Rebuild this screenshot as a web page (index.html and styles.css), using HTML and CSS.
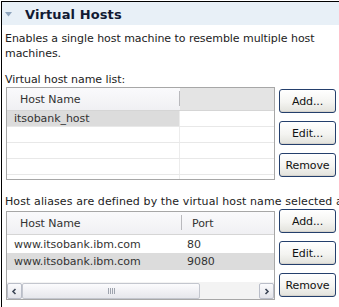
FILE: index.html
```html
<!DOCTYPE html>
<html>
<head>
<meta charset="utf-8">
<link rel="stylesheet" href="styles.css">
</head>
<body>
<div class="panel">
  <div class="section-head">
    <svg class="twisty" width="7" height="5" viewBox="0 0 7 5"><path d="M0 0H7L3.5 4.5Z" fill="#8ea4bc"/></svg>
    <span class="title">Virtual Hosts</span>
  </div>
  <div class="content">
    <p class="desc">Enables a single host machine to resemble multiple host machines.</p>
    <p class="label">Virtual host name list:</p>
    <div class="group">
      <div class="table t1">
        <div class="thead">
          <div class="th c1">Host Name</div>
          <div class="th filler"></div>
        </div>
        <div class="tbody grid">
          <div class="tr sel"><div class="td c1">itsobank_host</div><div class="td rest"></div></div>
          <div class="tr"><div class="td c1"></div><div class="td rest"></div></div>
          <div class="tr"><div class="td c1"></div><div class="td rest"></div></div>
          <div class="tr"><div class="td c1"></div><div class="td rest"></div></div>
          <div class="tr"><div class="td c1"></div><div class="td rest"></div></div>
        </div>
      </div>
      <div class="buttons b1">
        <button class="btn">Add...</button>
        <button class="btn">Edit...</button>
        <button class="btn">Remove</button>
      </div>
    </div>
    <p class="label cut">Host aliases are defined by the virtual host name selected above.</p>
    <div class="group">
      <div class="table t2">
        <div class="thead">
          <div class="th c1">Host Name</div>
          <div class="th c2">Port</div>
        </div>
        <div class="tbody">
          <div class="tr"><div class="td c1">www.itsobank.ibm.com</div><div class="td c2">80</div></div>
          <div class="tr sel full"><div class="td c1">www.itsobank.ibm.com</div><div class="td c2">9080</div></div>
        </div>
        <div class="hscroll">
          <div class="sb-btn"><svg width="7" height="7" viewBox="0 0 7 7"><path d="M4.5 1L2 3.5L4.5 6" fill="none" stroke="#3c4656" stroke-width="1.6"/></svg></div>
          <div class="sb-thumb"><span class="grip"></span></div>
          <div class="sb-track"></div>
          <div class="sb-btn"><svg width="7" height="7" viewBox="0 0 7 7"><path d="M2.5 1L5 3.5L2.5 6" fill="none" stroke="#3c4656" stroke-width="1.6"/></svg></div>
        </div>
      </div>
      <div class="buttons b2">
        <button class="btn">Add...</button>
        <button class="btn">Edit...</button>
        <button class="btn">Remove</button>
      </div>
    </div>
  </div>
</div>
</body>
</html>
```

FILE: styles.css
```css
* { box-sizing: border-box; }
html, body { margin: 0; padding: 0; background: #fff; }
body {
  width: 339px;
  height: 307px;
  overflow: hidden;
  font-family: "DejaVu Sans", Tahoma, sans-serif;
  font-size: 11px;
  letter-spacing: -0.05px;
  color: #222;
}
.panel {
  margin: 1px 0 0 1px;
  border-top: 1px solid #000;
  border-left: 1px solid #000;
  height: 306px;
}
.section-head {
  height: 23px;
  background: #e8f0f7;
  display: flex;
  align-items: center;
  padding-left: 3px;
}
.twisty { margin-top: 2px; }
.title {
  margin-left: 13px;
  font-weight: bold;
  font-size: 13px;
  letter-spacing: 0.1px;
  color: #111a33;
  line-height: 16px;
  padding-top: 2px;
}
.content { padding-left: 3px; }
p { margin: 0; }
.desc { margin-top: 6px; line-height: 15px; padding-right: 4px; }
.label { margin-top: 11px; line-height: 15px; }
.label.cut { margin-top: 14px; white-space: nowrap; overflow: hidden; letter-spacing: 0.1px; }
.group { display: flex; align-items: flex-start; gap: 4px; }
.table {
  margin-left: 1px;
  width: 269px;
  border: 1px solid #a7a7a7;
  background: #fff;
  display: flex;
  flex-direction: column;
  overflow: hidden;
  color: #333;
}
.t1 { height: 93px; }
.t2 { height: 89px; margin-top: 2px; }
.thead { display: flex; height: 23px; flex: none; }
.th {
  line-height: 22px;
  padding-top: 1px;
  border-bottom: 1px solid #d5d5d5;
  white-space: nowrap;
}
.th.c1 {
  background: linear-gradient(#fafafc, #f0f0f3);
  padding-left: 13px;
  position: relative;
}
.th.c1::after {
  content: "";
  position: absolute;
  right: 0;
  top: 3px;
  bottom: 4px;
  width: 1px;
  background: #b9b9bd;
}
.t1 .th.c1 { width: 173px; }
.t2 .th.c1 { width: 175px; }
.th.filler { flex: 1; background: #e4e4e4; }
.th.c2 { flex: 1; background: linear-gradient(#fafafc, #f0f0f3); padding-left: 10px; }
.tbody { flex: 1; overflow: hidden; }
.tr { display: flex; height: 17px; }
.td { line-height: 17px; white-space: nowrap; }
.grid .tr { height: 16px; border-bottom: 1px solid #e8e8e8; }
.grid .td { line-height: 16px; }
.t1 .td.c1 { width: 173px; padding-left: 7px; border-right: 1px solid #ececec; }
.t1 .td.rest { flex: 1; }
.t1 .tr.sel .td.c1 { background: #dcdcdc; }
.t2 .tbody { padding-top: 1px; }
.t2 .td.c1 { width: 175px; padding-left: 7px; }
.t2 .td.c2 { flex: 1; padding-left: 5px; }
.t2 .tr.sel { background: #dcdcdc; }
.hscroll {
  height: 17px;
  flex: none;
  display: flex;
  background: #f3f3f3;
}
.sb-btn {
  width: 15px;
  height: 16px;
  margin-top: 1px;
  border: 1px solid #b9bdc8;
  border-radius: 2px;
  background: linear-gradient(#fbfbfd, #e3e4ea);
  display: flex;
  align-items: center;
  justify-content: center;
}
.sb-thumb {
  width: 178px;
  height: 16px;
  margin-top: 1px;
  border: 1px solid #c3c6ce;
  border-radius: 2px;
  background: linear-gradient(#fbfbfd, #e6e7ec);
  display: flex;
  align-items: center;
  justify-content: center;
}
.grip {
  width: 7px;
  height: 6px;
  background: repeating-linear-gradient(90deg, #9ea3ad 0 1px, transparent 1px 2px);
}
.sb-track { flex: 1; }
.buttons { display: flex; flex-direction: column; gap: 8px; }
.b1 { margin-top: 2px; }
.b2 { margin-top: 0; }
.btn {
  width: 57px;
  height: 24px;
  padding: 0;
  font-family: "DejaVu Sans", Tahoma, sans-serif;
  font-size: 11px;
  letter-spacing: -0.1px;
  color: #111;
  border: 1px solid #243f6c;
  border-radius: 3px;
  background: linear-gradient(#ffffff, #f4f4f1 55%, #e2e2dc);
  box-shadow: inset 0 -1px 0 #d6d3cc;
}
```
